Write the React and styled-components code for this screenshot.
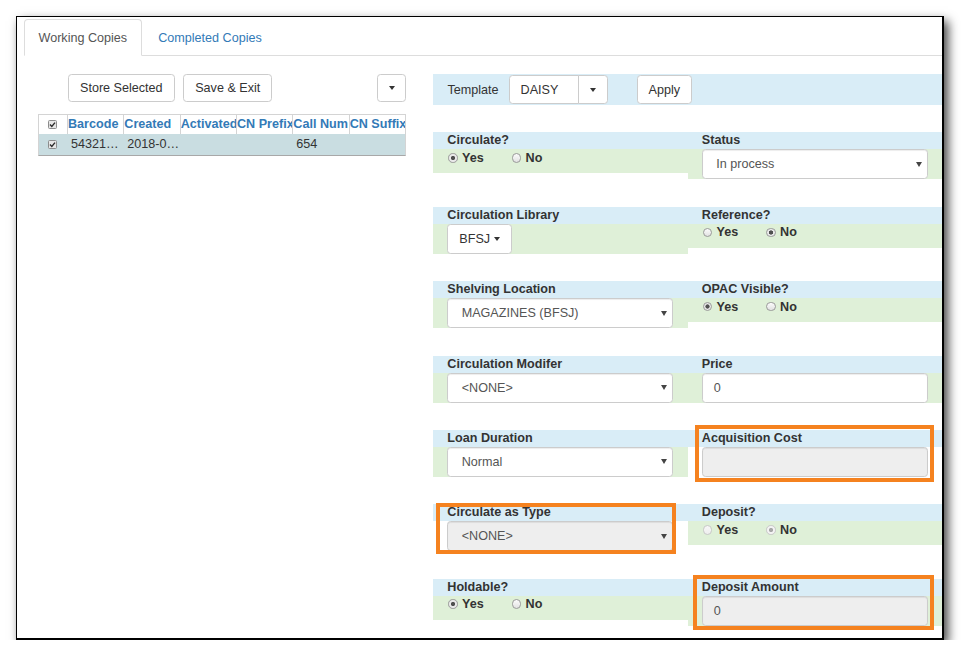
import React from "react";
import styled, { createGlobalStyle, css } from "styled-components";

const GlobalStyle = createGlobalStyle`
  html, body {
    margin: 0;
    padding: 0;
    background: #fff;
  }
  body {
    font-family: "Liberation Sans", Arial, sans-serif;
    font-size: 12.6px;
    color: #333;
  }
`;

const Frame = styled.div`
  box-sizing: border-box;
  width: 928px;
  height: 624px;
  margin: 16px 0 0 16px;
  border-style: solid;
  border-color: #000;
  border-width: 1px 2px 2px 1px;
  box-shadow: 4px 5px 10px rgba(0, 0, 0, 0.75);
  background: #fff;
  overflow: hidden;
`;

const Tabs = styled.div`
  display: flex;
  margin: 2px 0 0 7px;
  border-bottom: 1px solid #ddd;
`;

const Tab = styled.div`
  box-sizing: border-box;
  height: 37px;
  margin: 0 2px -1px 0;
  padding: 0 13.5px;
  display: flex;
  align-items: center;
  border: 1px solid transparent;
  border-radius: 4px 4px 0 0;
  color: #337ab7;
  ${(p) =>
    p.$active &&
    css`
      color: #555;
      background: #fff;
      border-color: #ddd #ddd transparent;
    `}
`;

const Body = styled.div`
  display: flex;
  align-items: flex-start;
  padding: 18px 0 0 21px;
`;

const LeftPanel = styled.div`
  width: 368px;
`;

const ButtonBar = styled.div`
  display: flex;
  gap: 8.6px;
  padding-left: 30px;
`;

const Button = styled.button`
  box-sizing: border-box;
  height: ${(p) => p.$h || 28}px;
  padding: 0 11px;
  display: inline-flex;
  align-items: center;
  justify-content: ${(p) => (p.$center ? "center" : "flex-start")};
  border: 1px solid #ccc;
  border-radius: ${(p) => p.$radius || "3.6px"};
  background: #fff;
  color: #333;
  font: inherit;
  white-space: nowrap;
`;

const IconButton = styled(Button)`
  width: ${(p) => p.$w || 29}px;
  padding: 0;
  justify-content: center;
  margin-left: ${(p) => p.$ml || "0"};
`;

const Caret = styled.span`
  display: inline-block;
  width: 0;
  height: 0;
  margin-left: ${(p) => p.$ml || 0}px;
  border-top: 4px solid #333;
  border-left: 3.6px solid transparent;
  border-right: 3.6px solid transparent;
`;

const Grid = styled.div`
  margin-top: 12.3px;
  border: 1px solid #d4d4d4;
  border-bottom-color: #a8a8a8;
`;

const GridRow = styled.div`
  display: grid;
  grid-template-columns: 28px repeat(6, 1fr);
  height: ${(p) => (p.$header ? 19 : 21)}px;
  line-height: ${(p) => (p.$header ? 19 : 20)}px;
  background: ${(p) => (p.$selected ? "#c9dde1" : "#fff")};
`;

const CheckCell = styled.div`
  display: flex;
  align-items: center;
  padding-left: 8.5px;
`;

const HeadCell = styled.div`
  border-left: 1px solid #d4d4d4;
  font-weight: bold;
  color: #337ab7;
  white-space: nowrap;
  overflow: hidden;
`;

const DataCell = styled.div`
  padding-left: 4px;
  white-space: nowrap;
  overflow: hidden;
  color: #333;
`;

const RightPanel = styled.div`
  margin-left: 27px;
  width: 509px;
`;

const TemplateBar = styled.div`
  height: 31px;
  display: flex;
  align-items: center;
  padding-left: 14.5px;
  background: #d9edf7;
`;

const TemplateLabel = styled.span`
  margin-right: 10px;
`;

const FieldRow = styled.div`
  display: grid;
  grid-template-columns: 1fr 1fr;
  align-items: start;
  margin-top: 27.4px;
`;

const Field = styled.div`
  position: relative;
`;

const Label = styled.div`
  height: 17px;
  line-height: 17px;
  padding-left: 14.3px;
  background: #d9edf7;
  font-weight: bold;
  white-space: nowrap;
`;

const Content = styled.div`
  box-sizing: border-box;
  height: ${(p) => (p.$radio ? 24 : 30)}px;
  padding: 0 14.3px;
  background: ${(p) => (p.$plain ? "#fff" : "#dff0d8")};
`;

const Control = styled.div`
  box-sizing: border-box;
  height: 30px;
  display: flex;
  align-items: center;
  padding: 0 5px 0 ${(p) => (p.$input ? 11 : 13.4)}px;
  border: 1px solid #ccc;
  border-radius: 3.6px;
  background: ${(p) => (p.$disabled ? "#eee" : "#fff")};
  box-shadow: inset 0 1px 1px rgba(0, 0, 0, 0.075);
  color: #555;
  white-space: nowrap;
`;

const SelectArrow = styled.span`
  margin-left: auto;
  width: 0;
  height: 0;
  border-top: 5px solid #444;
  border-left: 3px solid transparent;
  border-right: 3px solid transparent;
`;

const RadioLine = styled.div`
  display: flex;
  align-items: center;
  height: 17px;
  font-weight: bold;
`;

const RadioOption = styled.span`
  display: inline-flex;
  align-items: center;
  margin-right: 27px;
`;

const RadioCircle = styled.span`
  box-sizing: border-box;
  width: 9.5px;
  height: 9.5px;
  margin: 0 4.3px 0 1px;
  border-radius: 50%;
  border: 1px solid ${(p) => (p.$disabled ? "#c8c8c8" : "#9a9a9a")};
  background: ${(p) =>
    p.$checked
      ? `radial-gradient(circle, ${p.$disabled ? "#a8a8a8" : "#505050"} 0 1.8px, ${
          p.$disabled ? "#f3f3f3" : "#e9e9e9"
        } 2.4px)`
      : `linear-gradient(${p.$disabled ? "#f7f7f7, #eeeeee" : "#fbfbfb, #e2e2e2"})`};
`;

const Highlight = styled.div`
  position: absolute;
  inset: ${(p) => p.$inset};
  border: 4px solid #f5821f;
  pointer-events: none;
`;

const CheckBox = () => (
  <svg width="9" height="9" viewBox="0 0 9 9">
    <rect x="0.5" y="0.5" width="8" height="8" rx="1" fill="#e6e6e6" stroke="#8c8c8c" />
    <path d="M2 4.6 L3.8 6.4 L7 2.6" fill="none" stroke="#2b2b2b" strokeWidth="1.4" />
  </svg>
);

const Radios = ({ value, disabled }) => (
  <RadioLine>
    {["Yes", "No"].map((opt) => (
      <RadioOption key={opt}>
        <RadioCircle $checked={value === opt} $disabled={disabled} />
        {opt}
      </RadioOption>
    ))}
  </RadioLine>
);

const Select = ({ children, disabled }) => (
  <Control $disabled={disabled}>
    {children}
    <SelectArrow />
  </Control>
);

const columns = ["Barcode", "Created", "Activated", "CN Prefix", "Call Num", "CN Suffix"];
const copyRow = ["54321…", "2018-0…", "", "", "654", ""];

export default function App() {
  return (
    <>
      <GlobalStyle />
      <Frame>
        <Tabs>
          <Tab $active>Working Copies</Tab>
          <Tab>Completed Copies</Tab>
        </Tabs>
        <Body>
          <LeftPanel>
            <ButtonBar>
              <Button>Store Selected</Button>
              <Button>Save &amp; Exit</Button>
              <IconButton $ml="auto" $w={29}>
                <Caret />
              </IconButton>
            </ButtonBar>
            <Grid>
              <GridRow $header>
                <CheckCell>
                  <CheckBox />
                </CheckCell>
                {columns.map((c) => (
                  <HeadCell key={c}>{c}</HeadCell>
                ))}
              </GridRow>
              <GridRow $selected>
                <CheckCell>
                  <CheckBox />
                </CheckCell>
                {copyRow.map((v, i) => (
                  <DataCell key={i}>{v}</DataCell>
                ))}
              </GridRow>
            </Grid>
          </LeftPanel>

          <RightPanel>
            <TemplateBar>
              <TemplateLabel>Template</TemplateLabel>
              <Button $h={29.5} $radius="3.6px 0 0 3.6px" style={{ width: 70 }}>
                DAISY
              </Button>
              <IconButton $h={29.5} $w={30} $ml="-1px" $radius="0 3.6px 3.6px 0">
                <Caret />
              </IconButton>
              <Button $h={29.5} style={{ marginLeft: 29 }}>
                Apply
              </Button>
            </TemplateBar>

            <FieldRow>
              <Field>
                <Label>Circulate?</Label>
                <Content $radio>
                  <Radios value="Yes" />
                </Content>
              </Field>
              <Field>
                <Label>Status</Label>
                <Content>
                  <Select>In process</Select>
                </Content>
              </Field>
            </FieldRow>

            <FieldRow>
              <Field>
                <Label>Circulation Library</Label>
                <Content>
                  <Button $h={30}>
                    BFSJ
                    <Caret $ml={4} />
                  </Button>
                </Content>
              </Field>
              <Field>
                <Label>Reference?</Label>
                <Content $radio>
                  <Radios value="No" />
                </Content>
              </Field>
            </FieldRow>

            <FieldRow>
              <Field>
                <Label>Shelving Location</Label>
                <Content>
                  <Select>MAGAZINES (BFSJ)</Select>
                </Content>
              </Field>
              <Field>
                <Label>OPAC Visible?</Label>
                <Content $radio>
                  <Radios value="Yes" />
                </Content>
              </Field>
            </FieldRow>

            <FieldRow>
              <Field>
                <Label>Circulation Modifer</Label>
                <Content>
                  <Select>&lt;NONE&gt;</Select>
                </Content>
              </Field>
              <Field>
                <Label>Price</Label>
                <Content>
                  <Control $input>0</Control>
                </Content>
              </Field>
            </FieldRow>

            <FieldRow>
              <Field>
                <Label>Loan Duration</Label>
                <Content>
                  <Select>Normal</Select>
                </Content>
              </Field>
              <Field>
                <Label>Acquisition Cost</Label>
                <Content $plain>
                  <Control $input $disabled />
                </Content>
                <Highlight $inset="-5.3px 8px -5.1px 7px" />
              </Field>
            </FieldRow>

            <FieldRow>
              <Field>
                <Label>Circulate as Type</Label>
                <Content $plain>
                  <Select disabled>&lt;NONE&gt;</Select>
                </Content>
                <Highlight $inset="-1.7px 11.3px -2.3px 3px" />
              </Field>
              <Field>
                <Label>Deposit?</Label>
                <Content $radio>
                  <Radios value="No" disabled />
                </Content>
              </Field>
            </FieldRow>

            <FieldRow>
              <Field>
                <Label>Holdable?</Label>
                <Content $radio>
                  <Radios value="Yes" />
                </Content>
              </Field>
              <Field>
                <Label>Deposit Amount</Label>
                <Content>
                  <Control $input $disabled>
                    0
                  </Control>
                </Content>
                <Highlight $inset="-3.4px 8px -4.6px 5.3px" />
              </Field>
            </FieldRow>
          </RightPanel>
        </Body>
      </Frame>
    </>
  );
}
